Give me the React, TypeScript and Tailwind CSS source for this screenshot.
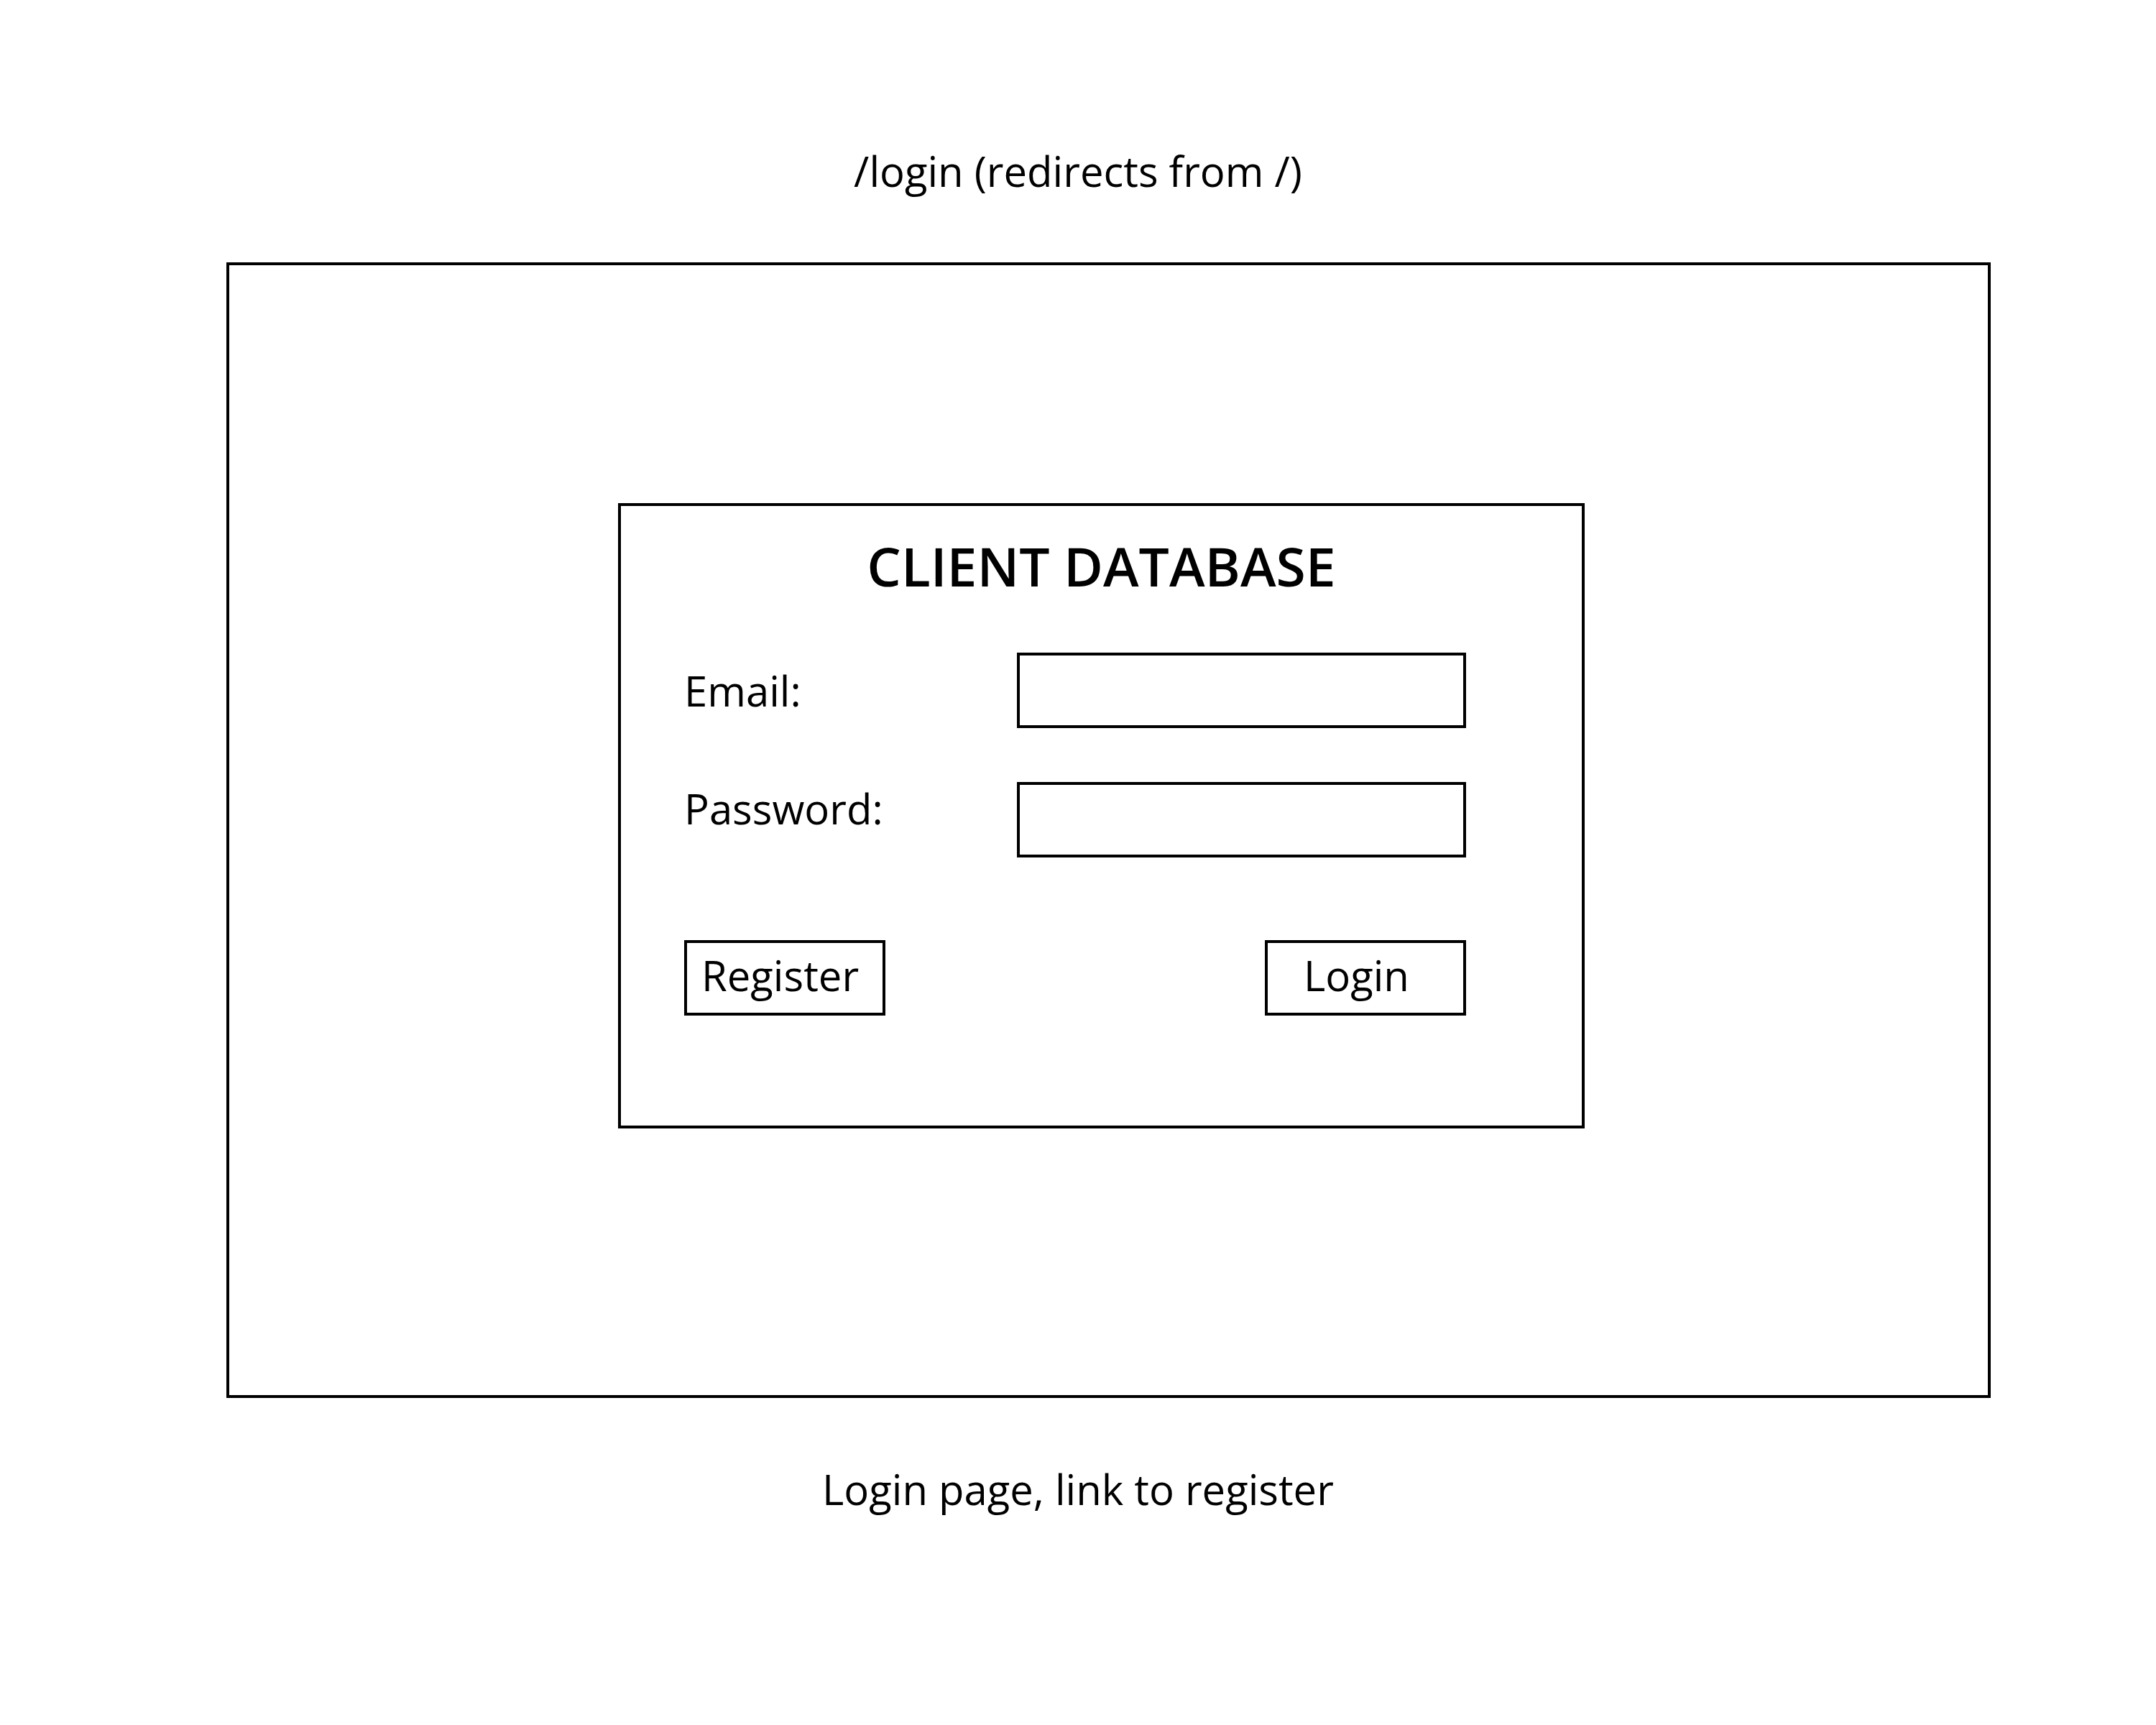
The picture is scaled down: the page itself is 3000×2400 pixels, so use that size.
import React from "react";

const field = "h-[105px] w-[625px] border-4 border-black bg-white px-6 outline-none";
const button = "h-[105px] w-[280px] border-4 border-black bg-white pb-2 text-left";

export default function App() {
  return (
    <main className="min-h-screen bg-white pt-[201px] pr-[230px] pb-20 pl-[315px] font-['Open_Sans',sans-serif] text-[58px] leading-[74px] text-black">
      <p className="pr-[85px] text-center">/login (redirects from /)</p>
      <section className="mt-[90px] border-4 border-black pt-[331px] pr-[20px] pb-[371px]">
        <form className="mx-auto w-[1345px] border-4 border-black pb-[153px]">
          <h1 className="pt-[33px] text-center text-[75px] leading-[100px] font-semibold">CLIENT DATABASE</h1>
          <div className="pr-[161px] pl-[88px]">
            <div className="mt-[71px] flex items-center justify-between">
              <label htmlFor="email">Email:</label>
              <input id="email" type="email" className={field} />
            </div>
            <div className="mt-[75px] flex items-start justify-between">
              <label htmlFor="password">Password:</label>
              <input id="password" type="password" className={field} />
            </div>
            <div className="mt-[115px] flex justify-between">
              <button type="button" className={button + " pl-5"}>Register</button>
              <button type="submit" className={button + " pl-[50px]"}>Login</button>
            </div>
          </div>
        </form>
      </section>
      <p className="mt-[90px] pr-[85px] text-center">Login page, link to register</p>
    </main>
  );
}
